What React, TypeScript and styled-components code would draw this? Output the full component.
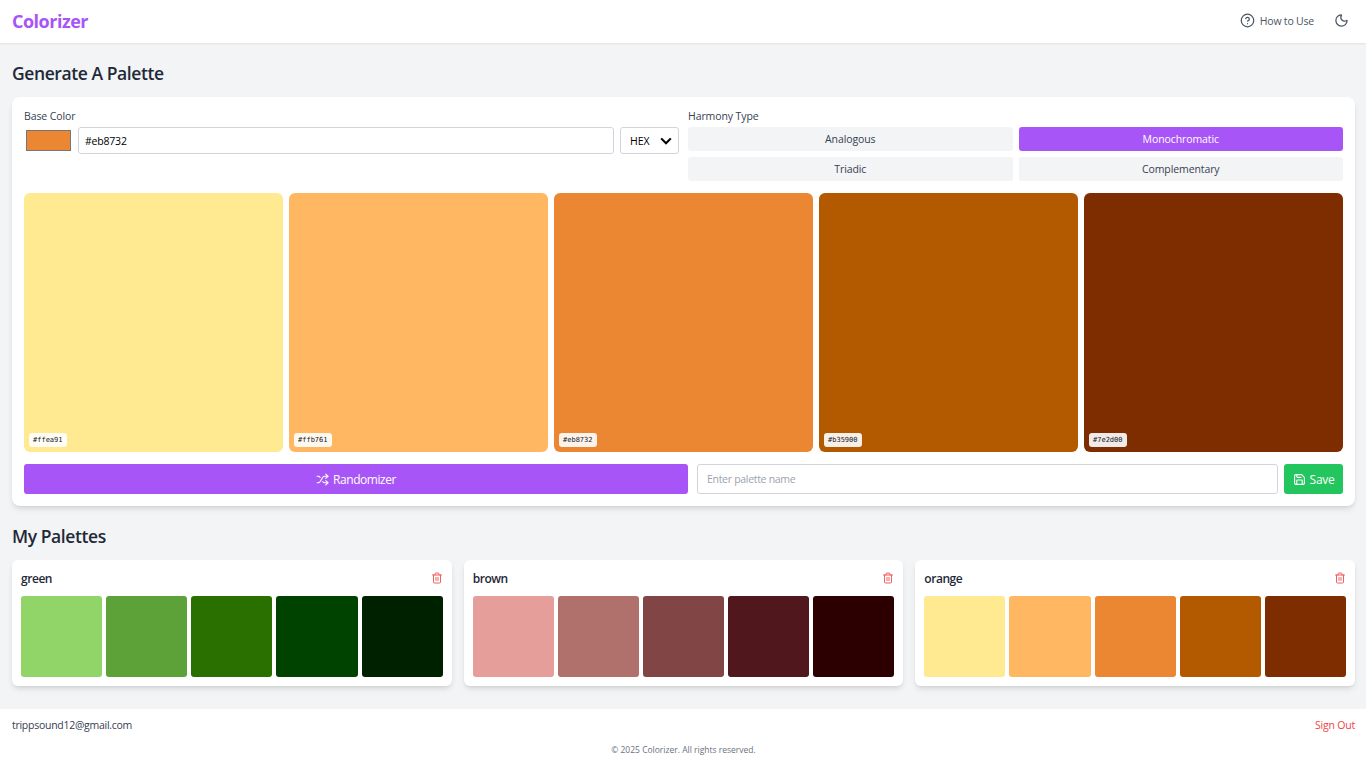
import styled, { createGlobalStyle } from "styled-components";
import { CircleHelp, Moon, Save, Shuffle, Trash2 } from "lucide-react";

const GlobalStyle = createGlobalStyle`
  * { box-sizing: border-box; }
  html, body { margin: 0; padding: 0; }
  body {
    background: #f3f4f6;
    color: #1f2937;
    font-family: "Open Sans", "Noto Sans", "Liberation Sans", sans-serif;
  }
`;

const harmonyTypes = ["Analogous", "Monochromatic", "Triadic", "Complementary"];
const currentColors = ["#ffe991", "#ffb761", "#eb8732", "#b35900", "#7e2d00"];
const currentLabels = ["#ffea91", "#ffb761", "#eb8732", "#b35900", "#7e2d00"];

const savedPalettes = [
  { name: "green", colors: ["#91d568", "#5ca238", "#2a7000", "#004300", "#002100"] },
  { name: "brown", colors: ["#e59e9a", "#b0706c", "#824545", "#50171c", "#2c0000"] },
  { name: "orange", colors: ["#ffe991", "#ffb761", "#eb8732", "#b35900", "#7e2d00"] },
];

export default function App() {
  return (
    <Page>
      <GlobalStyle />
      <Header>
        <Logo>Colorizer</Logo>
        <HeaderActions>
          <HelpLink>
            <CircleHelp size={15} strokeWidth={2} />
            How to Use
          </HelpLink>
          <ThemeButton>
            <Moon size={15} strokeWidth={2} />
          </ThemeButton>
        </HeaderActions>
      </Header>

      <Main>
        <SectionTitle>Generate A Palette</SectionTitle>
        <GeneratorCard>
          <Controls>
            <div>
              <FieldLabel>Base Color</FieldLabel>
              <BaseColorRow>
                <ColorChip />
                <HexInput readOnly value="#eb8732" />
                <FormatSelect>
                  HEX
                  <ChevronIcon viewBox="0 0 16 16">
                    <path d="M2.5 5 L8 10.5 L13.5 5" />
                  </ChevronIcon>
                </FormatSelect>
              </BaseColorRow>
            </div>
            <div>
              <FieldLabel>Harmony Type</FieldLabel>
              <HarmonyGrid>
                {harmonyTypes.map((type) => (
                  <HarmonyButton key={type} $active={type === "Monochromatic"}>
                    {type}
                  </HarmonyButton>
                ))}
              </HarmonyGrid>
            </div>
          </Controls>

          <SwatchRow>
            {currentColors.map((color, i) => (
              <Swatch key={color} $color={color}>
                <HexTag>{currentLabels[i]}</HexTag>
              </Swatch>
            ))}
          </SwatchRow>

          <ActionRow>
            <RandomizeButton>
              <Shuffle size={13} strokeWidth={2} />
              Randomizer
            </RandomizeButton>
            <SaveGroup>
              <NameInput placeholder="Enter palette name" />
              <SaveButton>
                <Save size={13} strokeWidth={2} />
                Save
              </SaveButton>
            </SaveGroup>
          </ActionRow>
        </GeneratorCard>

        <PalettesTitle>My Palettes</PalettesTitle>
        <PaletteGrid>
          {savedPalettes.map((palette) => (
            <PaletteCard key={palette.name}>
              <PaletteHead>
                <PaletteName>{palette.name}</PaletteName>
                <DeleteButton>
                  <Trash2 size={12} strokeWidth={2} />
                </DeleteButton>
              </PaletteHead>
              <MiniRow>
                {palette.colors.map((color) => (
                  <MiniSwatch key={color} $color={color} />
                ))}
              </MiniRow>
            </PaletteCard>
          ))}
        </PaletteGrid>
      </Main>

      <Footer>
        <FooterTop>
          <Email>trippsound12@gmail.com</Email>
          <SignOut>Sign Out</SignOut>
        </FooterTop>
        <Copyright>© 2025 Colorizer. All rights reserved.</Copyright>
      </Footer>
    </Page>
  );
}

const Page = styled.div`
  display: flex;
  flex-direction: column;
  height: 766px;
  overflow: hidden;
`;

const Header = styled.header`
  display: flex;
  align-items: center;
  justify-content: space-between;
  height: 43px;
  padding: 0 12px 2px;
  background: #fff;
  box-shadow: 0 1px 2px rgba(0, 0, 0, 0.08);
`;

const Logo = styled.div`
  font-size: 18px;
  font-weight: 700;
  letter-spacing: -0.5px;
  color: #a855f7;
`;

const HeaderActions = styled.div`
  display: flex;
  align-items: center;
  gap: 20px;
  color: #4b5563;
`;

const HelpLink = styled.div`
  display: flex;
  align-items: center;
  gap: 5px;
  font-size: 10.5px;
  letter-spacing: -0.2px;
`;

const ThemeButton = styled.div`
  display: flex;
  margin-right: 5px;
`;

const Main = styled.main`
  flex: 1;
  padding: 20px 11px 0 12px;
`;

const SectionTitle = styled.h2`
  margin: 0 0 12px;
  height: 22px;
  line-height: 20px;
  font-size: 17.5px;
  font-weight: 600;
  letter-spacing: -0.42px;
  color: #1f2937;
`;

const PalettesTitle = styled(SectionTitle)`
  margin: 20px 0 12px;
`;

const GeneratorCard = styled.section`
  height: 409px;
  padding: 12px;
  background: #fff;
  border-radius: 8px;
  box-shadow: 0 4px 6px -1px rgba(0, 0, 0, 0.1), 0 2px 4px -2px rgba(0, 0, 0, 0.1);
`;

const Controls = styled.div`
  display: grid;
  grid-template-columns: 655px 655px;
  gap: 9px;
  height: 84px;
`;

const FieldLabel = styled.div`
  height: 18px;
  line-height: 15px;
  font-size: 10.5px;
  letter-spacing: -0.1px;
  color: #374151;
`;

const BaseColorRow = styled.div`
  display: flex;
  gap: 6px;
  height: 27px;
`;

const ColorChip = styled.div`
  flex: none;
  width: 45px;
  height: 21px;
  margin: 3px 1px 0 2px;
  background: #eb8732;
  border: 1px solid #767676;
`;

const HexInput = styled.input`
  flex: 1;
  min-width: 0;
  height: 27px;
  padding: 0 6px;
  border: 1px solid #d1d5db;
  border-radius: 3px;
  outline: none;
  color: #000;
  font-family: inherit;
  font-size: 10.5px;
  letter-spacing: -0.2px;
`;

const FormatSelect = styled.div`
  flex: none;
  display: flex;
  align-items: center;
  justify-content: space-between;
  width: 59px;
  height: 27px;
  padding: 0 5px 0 9px;
  border: 1px solid #d1d5db;
  border-radius: 3px;
  font-size: 10.5px;
  letter-spacing: -0.1px;
  color: #000;
`;

const ChevronIcon = styled.svg`
  width: 14px;
  height: 14px;
  fill: none;
  stroke: #000;
  stroke-width: 2.4;
`;

const HarmonyGrid = styled.div`
  display: grid;
  grid-template-columns: 1fr 1fr;
  gap: 6px;
`;

const HarmonyButton = styled.div<{ $active?: boolean }>`
  display: flex;
  align-items: center;
  justify-content: center;
  height: 24px;
  border-radius: 3px;
  font-size: 10.5px;
  font-weight: 500;
  letter-spacing: -0.1px;
  background: ${({ $active }) => ($active ? "#a855f7" : "#f3f4f6")};
  color: ${({ $active }) => ($active ? "#fff" : "#374151")};
`;

const SwatchRow = styled.div`
  display: grid;
  grid-template-columns: repeat(5, 1fr);
  gap: 6px;
`;

const Swatch = styled.div<{ $color: string }>`
  position: relative;
  height: 259px;
  border-radius: 6px;
  background: ${({ $color }) => $color};
`;

const HexTag = styled.span`
  position: absolute;
  left: 5px;
  bottom: 5px;
  padding: 0 4px;
  height: 14px;
  line-height: 14px;
  border-radius: 3px;
  background: rgba(255, 255, 255, 0.9);
  font-family: "DejaVu Sans Mono", monospace;
  font-size: 7px;
  color: #111827;
`;

const ActionRow = styled.div`
  display: grid;
  grid-template-columns: 664px 646px;
  gap: 9px;
  margin-top: 12px;
`;

const RandomizeButton = styled.div`
  display: flex;
  align-items: center;
  justify-content: center;
  gap: 4px;
  height: 30px;
  border-radius: 3px;
  background: #a855f7;
  color: #fff;
  font-size: 12px;
  letter-spacing: -0.45px;
`;

const SaveGroup = styled.div`
  display: flex;
  gap: 6px;
`;

const NameInput = styled.input`
  flex: 1;
  min-width: 0;
  height: 30px;
  padding: 0 9px;
  border: 1px solid #d1d5db;
  border-radius: 3px;
  outline: none;
  font-family: inherit;
  font-size: 10.5px;
  letter-spacing: -0.3px;

  &::placeholder {
    color: #9ca3af;
  }
`;

const SaveButton = styled.div`
  flex: none;
  display: flex;
  align-items: center;
  justify-content: center;
  gap: 4px;
  width: 59px;
  height: 30px;
  border-radius: 3px;
  background: #22c55e;
  color: #fff;
  font-size: 12px;
  letter-spacing: -0.3px;
`;

const PaletteGrid = styled.div`
  display: grid;
  grid-template-columns: repeat(3, 1fr);
  gap: 12px;
`;

const PaletteCard = styled.article`
  height: 126px;
  padding: 9px;
  background: #fff;
  border-radius: 6px;
  box-shadow: 0 4px 6px -1px rgba(0, 0, 0, 0.1), 0 2px 4px -2px rgba(0, 0, 0, 0.1);
`;

const PaletteHead = styled.div`
  display: flex;
  align-items: center;
  justify-content: space-between;
  height: 18px;
  margin-bottom: 9px;
`;

const PaletteName = styled.div`
  font-size: 12px;
  font-weight: 600;
  letter-spacing: -0.45px;
  color: #1f2937;
`;

const DeleteButton = styled.div`
  display: flex;
  color: #ef4444;
  opacity: 0.85;
`;

const MiniRow = styled.div`
  display: grid;
  grid-template-columns: repeat(5, 1fr);
  gap: 4px;
`;

const MiniSwatch = styled.div<{ $color: string }>`
  height: 81px;
  border-radius: 3px;
  background: ${({ $color }) => $color};
`;

const Footer = styled.footer`
  height: 57px;
  padding: 9px 11px 0 12px;
  background: #fff;
`;

const FooterTop = styled.div`
  display: flex;
  justify-content: space-between;
  font-size: 10.5px;
  line-height: 15px;
`;

const Email = styled.span`
  color: #374151;
  letter-spacing: -0.27px;
`;

const SignOut = styled.span`
  color: #ef4444;
  letter-spacing: -0.2px;
`;

const Copyright = styled.div`
  margin-top: 11px;
  text-align: center;
  font-size: 8.5px;
  line-height: 12px;
  color: #6b7280;
`;
